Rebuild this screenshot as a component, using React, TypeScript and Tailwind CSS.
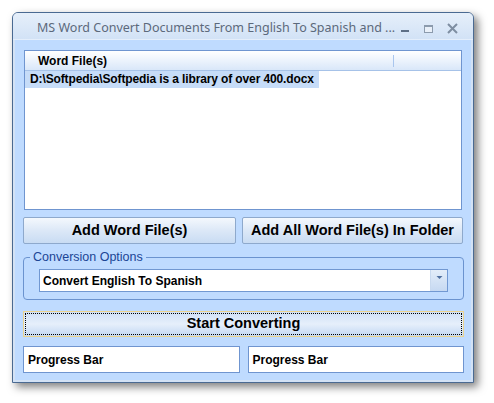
import React from 'react';

const font = "font-['Liberation_Sans',Arial,sans-serif]";

const WinButton = ({ label, className }: { label: string; className: string }) => (
  <button
    className={`h-[27px] rounded-[2px] border border-[#8ea9cc] bg-gradient-to-b from-[#f4f8fd] via-[#dce8f7] to-[#c9dcf3] text-[14.5px] font-bold text-black ${className}`}
  >
    {label}
  </button>
);

const ProgressBox = () => (
  <div className="h-[27px] border border-[#6f95d0] bg-white pl-[4px] flex items-center text-[12px] font-bold text-black">
    Progress Bar
  </div>
);

export default function App() {
  return (
    <div className={`min-h-screen bg-white pt-[12px] pl-[12px] ${font}`}>
      <div className="w-[462px] h-[371px] flex flex-col rounded-t-[6px] border border-[#4a6a92] bg-[#d3e2f5] shadow-[4px_4px_9px_rgba(0,0,0,0.5)]">
        {/* title bar */}
        <div className="h-[27px] pt-[5px] flex items-center rounded-t-[5px] bg-gradient-to-b from-[#e6effa] to-[#d2e2f6] border-b border-[#e4eefb]">
          <span className="pl-[24px] text-[12.5px] text-[#5c697b] font-['Noto_Sans',sans-serif] whitespace-nowrap">
            MS Word Convert Documents From English To Spanish and ...
          </span>
          <div className="ml-auto flex items-center mr-[8px]">
            <svg width="24" height="16" viewBox="0 0 24 16">
              <rect x="6" y="9" width="8" height="2" fill="#5d6f86" />
            </svg>
            <svg width="24" height="16" viewBox="0 0 24 16">
              <rect x="5.5" y="4.5" width="8" height="7" fill="#e9f0f9" stroke="#8c9bad" />
              <rect x="5" y="4" width="9" height="2" fill="#8c9bad" />
            </svg>
            <svg width="24" height="16" viewBox="0 0 24 16">
              <path d="M5 3 L14 12 M14 3 L5 12" stroke="#7e8ea2" strokeWidth="2" />
            </svg>
          </div>
        </div>

        {/* client area */}
        <div className="mx-[2px] h-[340px] bg-[#bfdbff] pt-[10px] pl-[8px] pr-[7px] flex flex-col">
          {/* list view */}
          <div className="ml-[1px] mr-[2px] h-[160px] border border-[#6f95d0] bg-white">
            <div className="h-[20px] flex items-center bg-gradient-to-b from-white to-[#d9e7f9] border-b border-[#a6c2e8]">
              <span className="pl-[13px] text-[12px] font-bold text-black w-[368px]">Word File(s)</span>
              <span className="h-[12px] w-px bg-[#a9c6ee]" />
            </div>
            <div className="h-[17px] flex">
              <span className="bg-[#c6dcf8] px-[5px] text-[12px] tracking-[-0.12px] font-bold text-black leading-[17px] whitespace-nowrap">
                D:\Softpedia\Softpedia is a library of over 400.docx
              </span>
            </div>
          </div>

          {/* buttons */}
          <div className="mt-[7px] flex gap-[6px]">
            <WinButton label="Add Word File(s)" className="w-[213px]" />
            <WinButton label="Add All Word File(s) In Folder" className="w-[221px]" />
          </div>

          {/* group box */}
          <div className="relative mt-[13px] h-[43px] rounded-[4px] border border-[#6b93cf] pt-[11px] px-[15px]">
            <span className="absolute -top-[8px] left-[6px] px-[3px] bg-[#bfdbff] text-[12.5px] leading-[14px] text-[#1c4595]">
              Conversion Options
            </span>
            <div className="h-[23px] flex border border-[#7198d2] bg-white">
              <span className="flex-1 pl-[3px] flex items-center text-[12px] font-bold text-black">
                Convert English To Spanish
              </span>
              <div className="w-[17px] flex justify-center border-l border-[#c8d9ef] bg-gradient-to-b from-[#e3edf9] to-[#c6d9f2]">
                <svg width="9" height="14" viewBox="0 0 9 14">
                  <path d="M1.5 6 L7.5 6 L4.5 9 Z" fill="#4f6f9f" />
                </svg>
              </div>
            </div>
          </div>

          {/* start converting */}
          <div className="mt-[11px] h-[26px] border border-[#ecd48f] bg-gradient-to-b from-[#cfe0f6] via-[#e6effb] to-[#c3d8f3] p-[1px]">
            <div className="h-full border border-dotted border-black flex items-center justify-center text-[14.5px] font-bold text-black">
              Start Converting
            </div>
          </div>

          {/* progress */}
          <div className="mt-[9px] grid grid-cols-2 gap-[8px]">
            <ProgressBox />
            <ProgressBox />
          </div>
        </div>
      </div>
    </div>
  );
}
